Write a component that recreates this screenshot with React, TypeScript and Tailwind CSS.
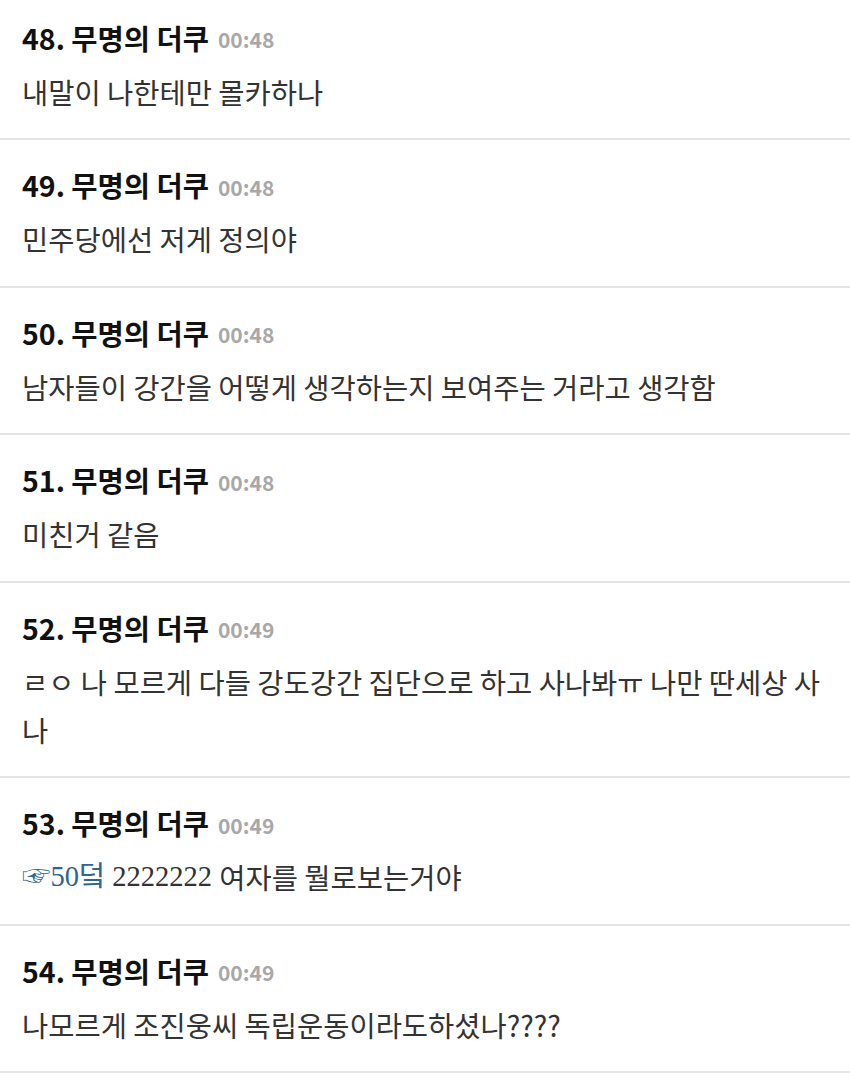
const FONT = { fontFamily: '"Noto Sans CJK KR", "Noto Sans", sans-serif' };

type Comment = {
  no: number;
  time: string;
  body: React.ReactNode;
};

const COMMENTS: Comment[] = [
  { no: 48, time: '00:48', body: '내말이 나한테만 몰카하나' },
  { no: 49, time: '00:48', body: '민주당에선 저게 정의야' },
  { no: 50, time: '00:48', body: '남자들이 강간을 어떻게 생각하는지 보여주는 거라고 생각함' },
  { no: 51, time: '00:48', body: '미친거 같음' },
  { no: 52, time: '00:49', body: 'ㄹㅇ 나 모르게 다들 강도강간 집단으로 하고 사나봐ㅠ 나만 딴세상 사나' },
  {
    no: 53,
    time: '00:49',
    body: (
      <>
        <span className="align-top font-['Liberation_Serif','Noto_Sans_CJK_KR',serif] text-[#2e6690]">☞50덬</span>
        <span className="align-top font-['Liberation_Serif','Noto_Sans_CJK_KR',serif]"> 2222222 </span>
        여자를 뭘로보는거야
      </>
    ),
  },
  { no: 54, time: '00:49', body: '나모르게 조진웅씨 독립운동이라도하셨나????' },
];

function CommentRow({ c }: { c: Comment }) {
  return (
    <div className="border-b-2 border-[#e4e4e4] px-[22px] pt-[27px] pb-[22.5px]">
      <div className="flex h-[36px] items-center">
        <span className="text-[28.5px] leading-[36px] font-bold text-[#111]">
          {c.no}. 무명의 더쿠
        </span>
        <span className="ml-[9px] mt-[3px] text-[21px] leading-[36px] font-bold text-[#a8a8a8]">{c.time}</span>
      </div>
      <p className="mt-[12px] text-[28.5px] leading-[48px] text-[#333]">{c.body}</p>
    </div>
  );
}

export default function App() {
  return (
    <div className="h-[1082px] w-[850px] overflow-hidden bg-white" style={FONT}>
      <div className="-mt-[7.5px]">
        {COMMENTS.map(c => (
          <CommentRow key={c.no} c={c} />
        ))}
      </div>
    </div>
  );
}
